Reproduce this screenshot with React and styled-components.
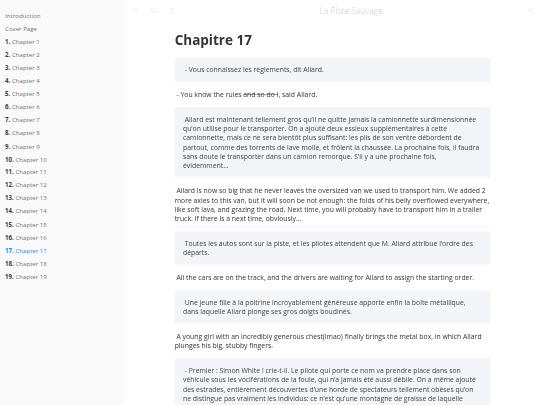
import React from "react";
import styled, { createGlobalStyle } from "styled-components";
import { AlignJustify, Search, Type, Share2 } from "lucide-react";

// The book is laid out at a 1280x960 design size and drawn at 540x405.
const SCALE = 540 / 1280;

const GlobalStyle = createGlobalStyle`
  html, body {
    margin: 0;
    padding: 0;
    background: #fff;
    overflow: hidden;
    font-family: "Open Sans", "Noto Sans", sans-serif;
  }
`;

const Viewport = styled.div`
  width: 1280px;
  height: 960px;
  overflow: hidden;
  transform: scale(${SCALE});
  transform-origin: 0 0;
`;

const Book = styled.div`
  display: flex;
  height: 100%;
`;

const Summary = styled.nav`
  width: 297px;
  flex-shrink: 0;
  background: #fafafa;
  padding-top: 22.4px;
`;

const SummaryItem = styled.div`
  height: 30.93px;
  line-height: 30.93px;
  padding-left: 12px;
  font-size: 14.5px;
  color: ${(p) => (p.$active ? "#1c8ce6" : "#727272")};
  white-space: nowrap;

  b {
    font-weight: 700;
    color: ${(p) => (p.$active ? "#1c8ce6" : "#3a3a3a")};
  }
`;

const Body = styled.div`
  flex: 1;
  min-width: 0;
`;

const Header = styled.header`
  display: flex;
  align-items: center;
  height: 50px;
`;

const ButtonGroup = styled.div`
  display: flex;
  width: ${(p) => p.$width}px;
`;

const HeaderButton = styled.span`
  display: flex;
  align-items: center;
  justify-content: center;
  width: 44px;
  height: 50px;
  color: #ececec;
`;

const Title = styled.h1`
  flex: 1;
  margin: 0;
  text-align: center;
  font-size: 20px;
  font-weight: 300;
  color: #cdcdcd;
`;

const Page = styled.main`
  width: 749px;
  margin: 0 auto;
  padding-top: 25.8px;
  color: #333;
  font-size: 16.25px;
  line-height: 22px;
`;

const Heading = styled.h2`
  margin: 0 0 22.6px;
  font-size: 32px;
  line-height: 38.4px;
  font-weight: 700;
  color: #333;
`;

const Quote = styled.div`
  background: #f3f5f9;
  padding: 17.45px 19px 17.45px 19.7px;
  margin: 19.4px 0;
  color: #444;
`;

const Para = styled.p`
  margin: 19.4px 0;
  position: relative;

  ${(p) =>
    p.$ruled &&
    `
    &::after {
      content: "";
      position: absolute;
      left: 0;
      right: 8px;
      bottom: -10px;
      height: 2px;
      background: #f3f3f3;
    }
  `}
`;

const Struck = styled.s`
  text-decoration: line-through;
`;

const chapters = Array.from({ length: 19 }, (_, i) => i + 1);

export default function App() {
  return (
    <>
      <GlobalStyle />
      <Viewport>
        <Book>
          <Summary>
            <SummaryItem>Introduction</SummaryItem>
            <SummaryItem>Cover Page</SummaryItem>
            {chapters.map((n) => (
              <SummaryItem key={n} $active={n === 17}>
                <b>{n}.</b> Chapter {n}
              </SummaryItem>
            ))}
          </Summary>
          <Body>
            <Header>
              <ButtonGroup $width={132}>
                <HeaderButton>
                  <AlignJustify size={15} strokeWidth={2.5} />
                </HeaderButton>
                <HeaderButton>
                  <Search size={15} strokeWidth={2.5} />
                </HeaderButton>
                <HeaderButton>
                  <Type size={15} strokeWidth={2.5} />
                </HeaderButton>
              </ButtonGroup>
              <Title>La Piste Sauvage</Title>
              <ButtonGroup $width={44}>
                <HeaderButton>
                  <Share2 size={14} strokeWidth={2.5} />
                </HeaderButton>
              </ButtonGroup>
            </Header>
            <Page>
              <Heading>Chapitre 17</Heading>
              <Quote>{"\u00a0- Vous connaissez les règlements, dit Allard."}</Quote>
              <Para>
                {"\u00a0- You know the rules "}
                <Struck>and so do I</Struck>, said Allard.
              </Para>
              <Quote>
                {"\u00a0Allard est maintenant tellement gros qu’il ne quitte jamais la camionnette surdimensionnée qu’on utilise pour le transporter. On a ajouté deux essieux supplémentaires à cette camionnette, mais ce ne sera bientôt plus suffisant: les plis de son ventre débordent de partout, comme des torrents de lave molle, et frôlent la chaussée. La prochaine fois, il faudra sans doute le transporter dans un camion remorque. S’il y a une prochaine fois, évidemment…"}
              </Quote>
              <Para $ruled>
                {"\u00a0Allard is now so big that he never leaves the oversized van we used to transport him. We added 2 more axles to this van, but it will soon be not enough: the folds of his belly overflowed everywhere, like soft lava, and grazing the road. Next time, you will probably have to transport him in a trailer truck. If there is a next time, obviously…"}
              </Para>
              <Quote>
                {"\u00a0Toutes les autos sont sur la piste, et les pilotes attendent que M. Allard attribue l’ordre des départs."}
              </Quote>
              <Para>
                {"\u00a0All the cars are on the track, and the drivers are waiting for Allard to assign the starting order."}
              </Para>
              <Quote>
                {"\u00a0Une jeune fille à la poitrine incroyablement généreuse apporte enfin la boite métallique, dans laquelle Allard plonge ses gros doigts boudinés."}
              </Quote>
              <Para>
                {"\u00a0A young girl with an incredibly generous chest(lmao) finally brings the metal box, in which Allard plunges his big, stubby fingers."}
              </Para>
              <Quote>
                {"\u00a0- Premier : Simon White ! crie-t-il. Le pilote qui porte ce nom va prendre place dans son véhicule sous les vociférations de la foule, qui n’a jamais été aussi débile. On a même ajouté des estrades, entièrement découvertes d’une horde de spectateurs tellement obèses qu’on ne distingue pas vraiment les individus: ce n’est qu’une montagne de graisse de laquelle émergent des visages rougeauds."}
              </Quote>
            </Page>
          </Body>
        </Book>
      </Viewport>
    </>
  );
}
